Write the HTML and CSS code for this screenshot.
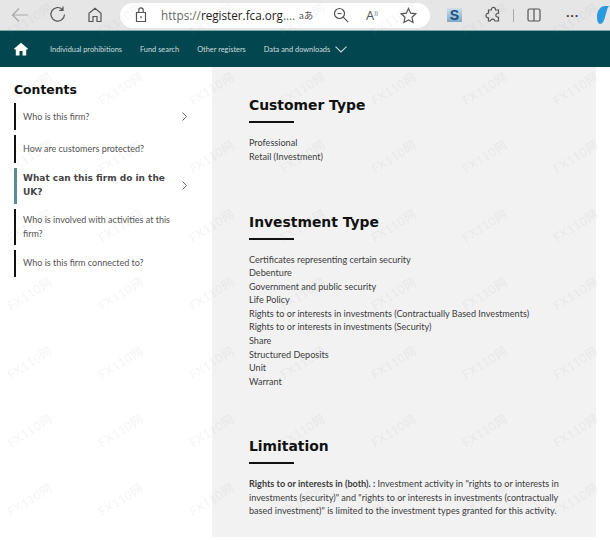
FILE: index.html
```html
<!DOCTYPE html>
<html lang="en">
<head>
<meta charset="utf-8">
<title>FCA Register</title>
<link rel="stylesheet" href="styles.css">
</head>
<body>
<header class="chrome">
  <svg class="ic back" width="20" height="20" viewBox="0 0 20 20"><path d="M18 10H3M9 3.500 2.500 10 9 16.500"/></svg>
  <svg class="ic reload" width="20" height="20" viewBox="0 0 20 20"><path d="M16.500 9.500a6.800 6.800 0 1 1-2-5M15 1.500v3.800h-3.800"/></svg>
  <svg class="ic home" width="20" height="20" viewBox="0 0 20 20"><path d="M4 16.500V8.300L10 3.200l6 5.100v8.200h-4v-5H8v5z"/></svg>
  <div class="address">
    <svg class="ic lock" width="14" height="16" viewBox="0 0 14 16"><path d="M2.500 5.500h9v9h-9zM4.800 5.500V3a2.200 2.200 0 0 1 4.400 0v2.500M7 9v2.200"/></svg>
    <span class="url">https://<b>register.fca.org</b>....</span>
    <span class="readas">aあ</span>
    <svg class="ic zoom-ic" width="16" height="16" viewBox="0 0 16 16"><circle cx="6.500" cy="6.500" r="5"/><path d="m10.200 10.200 5 5M4.500 6.500h4"/></svg>
    <span class="aloud">A<sup>))</sup></span>
    <svg class="ic star" width="17" height="17" viewBox="0 0 17 17"><path d="m8.500 1.500 2.200 4.700 5 .6-3.700 3.500 1 5.100-4.500-2.500-4.500 2.500 1-5.100L1.300 6.800l5-.6z"/></svg>
  </div>
  <div class="s-ext">S</div>
  <svg class="ic puzzle" width="18" height="18" viewBox="0 0 18 18"><path d="M7.500 3a2 2 0 0 1 3.800-.5l.3 1.500h2.900v3.200l-1.300.3a1.800 1.800 0 0 0 0 3.500l1.300.3V15H11l-.6-1a2 2 0 0 0-3.400 0l-.6 1H4.500v-3l-1-.4a2.200 2.200 0 0 1 0-4.200l1-.4V4h2.800z"/></svg>
  <span class="divider"></span>
  <svg class="ic split" width="14" height="14" viewBox="0 0 14 14"><path d="M7 1H2.500A1.500 1.500 0 0 0 1 2.500v9A1.500 1.500 0 0 0 2.500 13H7zM7 1h4.500A1.500 1.500 0 0 1 13 2.500v9a1.500 1.500 0 0 1-1.500 1.500H7"/></svg>
  <span class="dots">···</span>
  <svg class="copilot" width="13" height="20" viewBox="0 0 13 20"><path d="M13 1H8C3.500 1 1 5 0 10c-.5 4 .5 8 3 9 2.500 0 4-3 5-7l2-7c.5-2 1.500-4 3-4z" fill="#2a9ae0"/></svg>
</header>
<nav class="nav">
  <svg class="nav-home" width="14" height="14" viewBox="0 0 14 14"><path d="M7 .8 0 6.800l1 1 .8-.6V13.500h3.700V9h3v4.500h3.700V7.200l.8.600 1-1z"/></svg>
  <a>Individual prohibitions</a>
  <a>Fund search</a>
  <a>Other registers</a>
  <a class="nav-data">Data and downloads
    <svg width="12" height="7" viewBox="0 0 12 7"><path d="m.5.700 5.500 5.300L11.500.700"/></svg>
  </a>
</nav>
<div class="page">
  <aside class="side">
    <h2 class="side-title">Contents</h2>
    <ul class="toc">
      <li class="toc-item"><span>Who is this firm?</span><svg width="5" height="9" viewBox="0 0 5 9"><path d="m.5.500 4 4-4 4"/></svg></li>
      <li class="toc-item"><span>How are customers protected?</span></li>
      <li class="toc-item active"><span>What can this firm do in the UK?</span><svg width="5" height="9" viewBox="0 0 5 9"><path d="m.5.500 4 4-4 4"/></svg></li>
      <li class="toc-item"><span>Who is involved with activities at this firm?</span></li>
      <li class="toc-item"><span>Who is this firm connected to?</span></li>
    </ul>
  </aside>
  <main class="main">
    <section class="sec sec-customer">
      <h2>Customer Type</h2>
      <p>Professional<br>Retail (Investment)</p>
    </section>
    <section class="sec sec-invest">
      <h2>Investment Type</h2>
      <p>Certificates representing certain security<br>Debenture<br>Government and public security<br>Life Policy<br>Rights to or interests in investments (Contractually Based Investments)<br>Rights to or interests in investments (Security)<br>Share<br>Structured Deposits<br>Unit<br>Warrant</p>
    </section>
    <section class="sec">
      <h2>Limitation</h2>
      <p><strong>Rights to or interests in (both). :</strong> Investment activity in "rights to or interests in investments (security)" and "rights to or interests in investments (contractually based investment)" is limited to the investment types granted for this activity.</p>
    </section>
  </main>
</div>
<div class="marks" aria-hidden="true" id="marks"></div>
<script src="marks.js"></script>
</body>
</html>
```
FILE: marks.js
```js
var box = document.getElementById('marks');
for (var r = 0; r < 8; r++) {
  for (var c = 0; c < 7; c++) {
    var m = document.createElement('span');
    m.className = 'mark';
    m.textContent = 'FX110网';
    m.style.left = (29 + c * 91) + 'px';
    m.style.top = (19 + r * 68.5) + 'px';
    box.appendChild(m);
  }
}
```
FILE: styles.css
```css
* { box-sizing: border-box; }
html, body { margin: 0; padding: 0; }
body {
  width: 610px;
  height: 540px;
  overflow: hidden;
  position: relative;
  background: #fff;
  font-family: Lato, "Noto Sans", sans-serif;
  color: #3c3c3c;
}
.chrome {
  height: 30px;
  background: #e6e6e6;
  display: flex;
  align-items: center;
  padding-left: 10px;
}
.ic { fill: none; stroke: #555; stroke-width: 1.200; flex: none; }
.back { stroke: #a8a8a8; }
.reload { margin-left: 18px; }
.home { margin-left: 17px; }
.address {
  margin-left: 15px;
  width: 310px;
  height: 25px;
  background: #fff;
  border-radius: 13px;
  display: flex;
  align-items: center;
  padding-left: 14px;
  flex: none;
}
.url { margin-left: 13px; font-family: "Open Sans", sans-serif; font-size: 11.700px; color: #666; width: 130px; white-space: nowrap; flex: none; }
.url b { font-weight: 400; color: #222; }
.readas { font-size: 9.500px; color: #555; width: 14px; margin-left: 8px; white-space: nowrap; flex: none; font-family: Lato, "Noto Sans CJK JP", sans-serif; }
.zoom-ic { margin-left: 20px; }
.aloud { margin-left: 17px; font-size: 13px; line-height: 16px; color: #555; width: 18px; font-family: "Open Sans", sans-serif; flex: none; }
.aloud sup { font-size: 6px; line-height: 0; }
.star { margin-left: 16px; }
.s-ext {
  margin-left: 17px;
  width: 15px;
  height: 14px;
  background: linear-gradient(#cfe0ee, #7ea7c8);
  color: #1d4f7c;
  font: 700 14px/14px "Liberation Sans", sans-serif;
  text-align: center;
  flex: none;
}
.puzzle { margin-left: 22px; }
.divider { margin-left: 11px; width: 1px; height: 13px; background: #aaa; flex: none; }
.split { margin-left: 13px; }
.dots { margin-left: 25px; font: 700 13px "Liberation Sans", sans-serif; color: #444; width: 26px; flex: none; }
.copilot { margin-left: 5px; flex: none; }
.nav {
  height: 37px;
  background: #02474f;
  border-top: 1px solid #7fa8ab;
  display: flex;
  align-items: center;
  padding-left: 14px;
  color: #cfdcdd;
  font-size: 7.400px;
  white-space: nowrap;
}
.nav-home { fill: #fff; margin-right: 22px; flex: none; }
.nav a { margin-right: 18px; }
.nav-data { display: flex; align-items: center; gap: 5px; }
.nav-data svg { fill: none; stroke: #cfdcdd; stroke-width: 1.100; }
.page { display: flex; height: 473px; }
.side { width: 212px; padding: 14px 0 0 14px; flex: none; }
.side-title {
  margin: 0 0 4px;
  font: 700 12.400px/18px "DejaVu Sans", sans-serif;
  color: #111;
}
.toc { list-style: none; margin: 0; padding: 0; width: 174px; display: flex; flex-direction: column; gap: 5px; }
.toc-item {
  border-left: 2px solid #111;
  padding: 4.500px 1px 4.500px 7px;
  font-size: 9px;
  line-height: 13.500px;
  color: #555;
  display: flex;
  align-items: center;
  justify-content: space-between;
  gap: 12px;
  min-height: 27.300px;
}
.toc-item svg { fill: none; stroke: #666; stroke-width: 1; flex: none; }
.toc-item.active {
  border-left: 3px solid #5a8d93;
  font: 700 9px/13.500px "DejaVu Sans", sans-serif;
  color: #444;
  padding-left: 6px;
}
.main {
  width: 384px;
  height: 470px;
  background: #f2f2f3;
  padding: 29px 36px 0 37px;
  flex: none;
}
.sec h2 {
  margin: 0;
  font: 700 13.900px/18px "DejaVu Sans", sans-serif;
  color: #111;
}
.sec h2::after {
  content: "";
  display: block;
  width: 45px;
  height: 2px;
  background: #111;
  margin-top: 7px;
}
.sec p { margin: 0; padding-top: 13px; font-size: 9.100px; line-height: 13.600px; color: #3c3c3c; }
.sec-invest p { padding-top: 12.500px; }
.sec strong { font-weight: 700; }
.sec-customer { height: 117px; }
.sec-invest { height: 224px; }
.marks { position: absolute; inset: 0; pointer-events: none; overflow: hidden; }
.mark {
  position: absolute;
  font: 700 12.500px Lato, "Noto Sans CJK SC", sans-serif;
  color: rgba(128, 128, 128, .08);
  transform: translate(-50%, -50%) rotate(-32deg);
  white-space: nowrap;
}
```
